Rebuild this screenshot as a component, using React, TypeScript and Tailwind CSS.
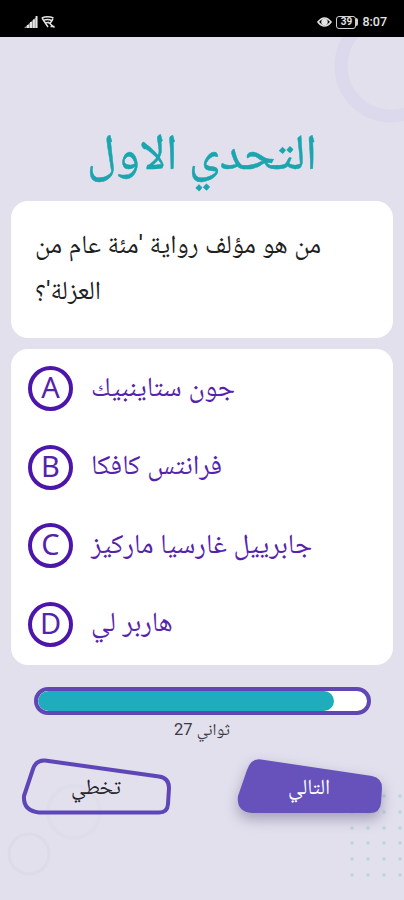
import React, { useState } from 'react';

interface Answer {
  letter: string;
  text: string;
}

const answers: Answer[] = [
  { letter: 'A', text: 'جون ستاينبيك' },
  { letter: 'B', text: 'فرانتس كافكا' },
  { letter: 'C', text: 'جابرييل غارسيا ماركيز' },
  { letter: 'D', text: 'هاربر لي' },
];

const StatusBar: React.FC = () => (
  <div className="relative flex h-[37px] items-start justify-between bg-black pr-[17px] pl-6 pt-[14px] text-[#e4e4e4]">
    <div className="flex gap-[3px] pt-[2px]">
      <svg width="14" height="12" viewBox="0 0 14 12" fill="currentColor">
        <path d="M0 12L13.4 0V12z" opacity=".65" />
        <path d="M3 12V9h2v3zM6 12V6h2v6zM9 12V3.5h1.8V12zM11.6 12V0h1.8v12z" />
      </svg>
      <svg width="15" height="12" viewBox="0 0 15 12" fill="none" stroke="currentColor" strokeWidth="1.5">
        <path d="M.8 2Q6.500-.3 12.500 2M2.5 4.500Q6.500 2.600 10.500 4.500M4.5 7Q6.500 5.800 8.500 7M1 2l6 9M7 6l6.500 5.500M9 7.500L12 3M9.5 10.5h4" />
      </svg>
    </div>
    <div className="flex items-center gap-[4px]">
      <svg width="15" height="12" viewBox="0 0 15 12" fill="none" stroke="currentColor" strokeWidth="1.7">
        <path d="M1 6Q7.5-2 14 6Q7.5 14 1 6z" />
        <circle cx="7.5" cy="6" r="2.4" fill="currentColor" />
      </svg>
      <div className="flex items-center">
        <span className="flex h-[13px] w-5 items-center justify-center rounded-[3px] border-[1.5px] border-[#d0d0d0] text-[10px] font-bold leading-none">39</span>
        <span className="h-[8px] w-[2px] rounded-r bg-[#d0d0d0]" />
      </div>
      <span className="text-[12.5px] font-medium leading-4">8:07</span>
    </div>
  </div>
);

const Background: React.FC = () => (
  <svg className="absolute inset-0" width="404" height="900" viewBox="0 0 404 900" fill="none">
    <circle cx="391" cy="66" r="50" stroke="#dcd9ed" strokeWidth="13" />
    <circle cx="74" cy="812" r="26" stroke="#dfddea" strokeWidth="4" />
    <circle cx="29" cy="854" r="20" stroke="#dddbe8" strokeWidth="3" />
    {[796, 812, 828, 843, 859, 875].map((y) =>
      [352, 368, 384, 400].map((x) => <circle key={`${x}-${y}`} cx={x} cy={y} r="1.8" fill="#b9d5e0" />)
    )}
  </svg>
);

const App: React.FC = () => {
  const [selected, setSelected] = useState<string>('');
  const secondsLeft = 27;

  return (
    <div className="relative flex h-[900px] w-[404px] flex-col overflow-hidden bg-[#e2e0ed] font-[Roboto,'Noto_Naskh_Arabic','DejaVu_Sans',sans-serif]">
      <Background />
      <StatusBar />

      <main className="relative flex flex-col px-[11px]">
        <h1 dir="rtl" className="flex h-[164px] items-center justify-center pt-[79px] font-['Noto_Naskh_Arabic','DejaVu_Sans',sans-serif] text-[50px] leading-none whitespace-nowrap text-[#1ba5ae] [-webkit-text-stroke:0.5px_#1ba5ae]">
          التحدي الاول
        </h1>

        <section dir="rtl" className="h-[137px] rounded-[17px] bg-white px-6 pt-5 text-left text-[26px] leading-[46px] text-[#202020]">
          <p className="whitespace-nowrap">
            من هو مؤلف رواية 'مئة عام من
            <br />
            العزلة'؟
          </p>
        </section>

        <section className="mt-[11px] flex h-[316px] flex-col gap-[33.5px] rounded-[17px] bg-white px-[17px] pt-[17px]">
          {answers.map((answer) => (
            <button
              key={answer.letter}
              type="button"
              aria-pressed={selected === answer.letter}
              onClick={() => setSelected(answer.letter)}
              className="flex h-[45px] items-center gap-[18px] text-[#5523ab]"
            >
              <span className="flex size-[45px] shrink-0 items-center justify-center rounded-full border-4 border-[#4d16aa] font-['Noto_Sans'] text-[29px] leading-none">
                <span className="-mt-[4px]">{answer.letter}</span>
              </span>
              <span dir="rtl" className="-mt-[5px] text-[27.5px] leading-[45px] whitespace-nowrap">{answer.text}</span>
            </button>
          ))}
        </section>

        <div className="mr-[22px] ml-[23px] mt-[22px] h-7 overflow-hidden rounded-full border-4 border-[#6047b3] bg-white">
          <div className="h-full rounded-full bg-[#1fadbd]" style={{ width: `${(secondsLeft / 30) * 100}%` }} />
        </div>
        <p dir="rtl" className="h-[30px] text-center text-[16.5px] leading-[30px] text-[#3b3943]">ثواني {secondsLeft}</p>

        <div className="mt-[13px] flex justify-between pr-[10px] pl-[10px]">
          <button type="button" className="relative h-[58px] w-[150px] text-[21.5px] text-[#25232b]">
            <svg className="absolute inset-0" width="150" height="58" viewBox="0 0 150 58" fill="none">
              <path d="M24 2.5L138 18.5Q148 20 148 30L147 46Q146.5 54.5 138 54.5H18Q2 53 3 38L12 11Q15 2 24 2.5Z" stroke="#5f46b7" strokeWidth="4" />
            </svg>
            <span dir="rtl" className="relative">تخطي</span>
          </button>
          <button type="button" className="relative h-[58px] w-[148px] text-[21.5px] text-white">
            <svg className="absolute inset-0 overflow-visible drop-shadow-[0_6px_7px_rgba(70,60,110,.4)]" width="148" height="58" viewBox="0 0 148 58">
              <path d="M26 1.5L137 18Q147 20 147 30L146 45Q145 55 135 55H17Q1 54 3 38L12 12Q16 0 26 1.5Z" fill="#6652ba" />
            </svg>
            <span dir="rtl" className="relative">التالي</span>
          </button>
        </div>
      </main>
    </div>
  );
};

export default App;
